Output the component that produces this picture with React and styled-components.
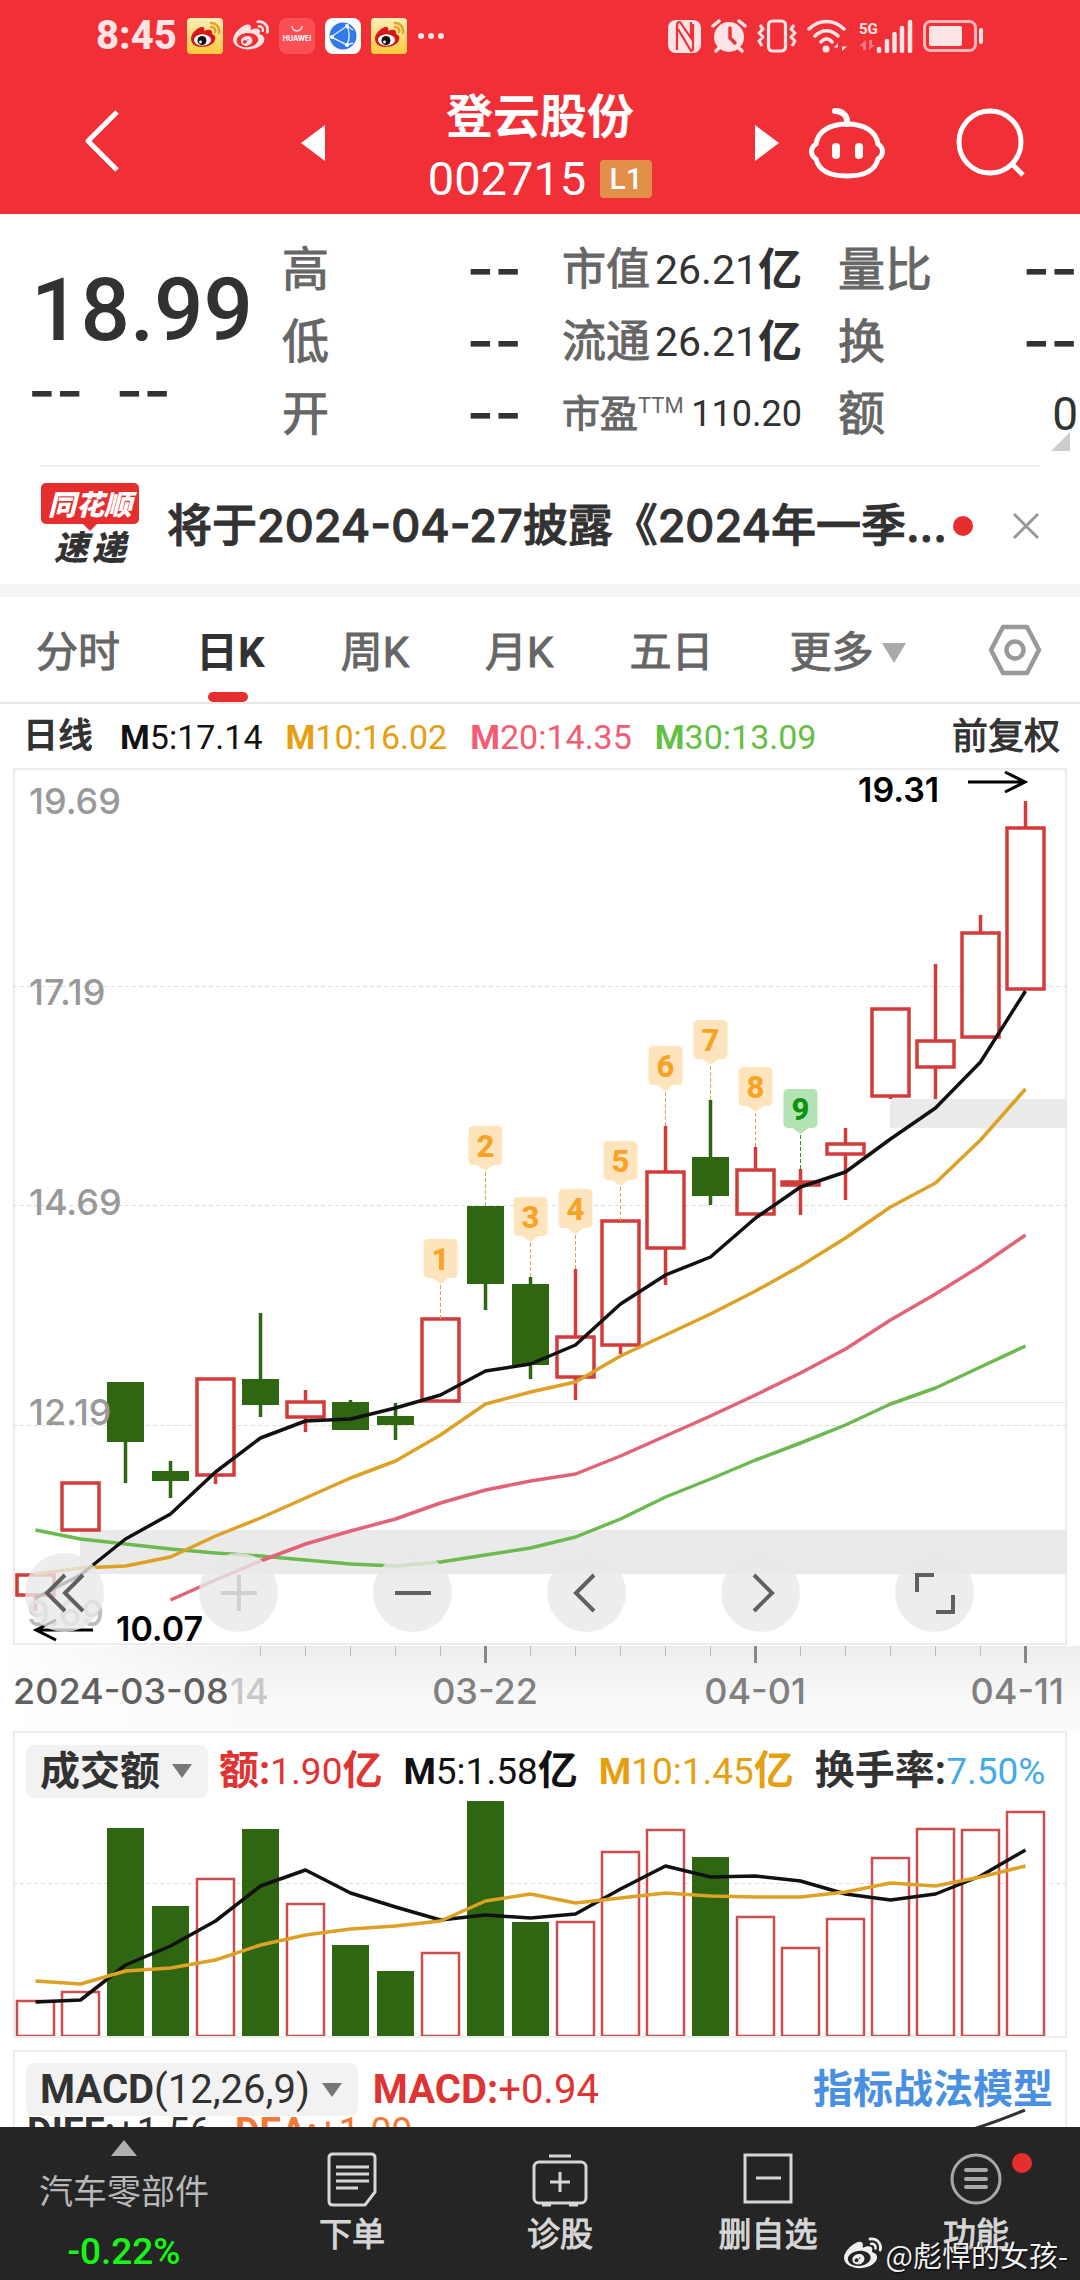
import React from "react";
import styled, { createGlobalStyle } from "styled-components";
import { FaWeibo } from "react-icons/fa";

const cjk = '"Noto Sans CJK SC", sans-serif';
const uiFont = `Roboto, ${cjk}`;
const wideFont = `Inter, ${cjk}`;

const color = {
  brand: "#f12f37",
  accent: "#e62e2e",
  up: "#d33b3a",
  down: "#2f6612",
  text: "#323232",
  label: "#666666",
  muted: "#999999",
  line: "#ececec",
  ma5: "#111111",
  ma10: "#e6a00f",
  ma20: "#f55c73",
  ma30: "#64c044",
};

const GlobalStyle = createGlobalStyle`
  *, *::before, *::after { box-sizing: border-box; }
  body { margin: 0; background: #fff; }
  button, select { font: inherit; color: inherit; border: 0; padding: 0; background: none; }
  svg { display: block; flex: none; }
  a { color: inherit; text-decoration: none; }
`;

const Screen = styled.div`
  display: flex;
  flex-direction: column;
  height: 100vh;
  overflow: hidden;
  background: #fff;
  color: ${color.text};
  font-family: ${uiFont};
`;

/* ---------- header ---------- */

const Header = styled.header`
  flex: none;
  background: ${color.brand};
  color: #fff;
`;

const StatusBar = styled.div`
  display: flex;
  justify-content: space-between;
  align-items: center;
  height: 72px;
  padding: 0 96px;
  color: #ffe4e5;
`;

const StatusGroup = styled.div`
  display: flex;
  align-items: center;
  gap: 10px;
`;

const Clock = styled.time`
  font-size: 40px;
  line-height: 48px;
  font-weight: 800;
`;

const Nav = styled.nav`
  display: grid;
  grid-template-columns: 1fr 478px 1fr;
  align-items: center;
  height: 142px;
`;

const BackButton = styled.button`
  justify-self: start;
  margin-left: 80px;
`;

const Pager = styled.div`
  display: flex;
  align-items: center;
  justify-content: space-between;
`;

const TitleBlock = styled.div`
  display: flex;
  flex-direction: column;
  align-items: center;
  padding-top: 8px;
`;

const StockName = styled.h1`
  margin: 0;
  font-size: 47px;
  line-height: 64px;
  font-weight: 700;
`;

const CodeLine = styled.div`
  display: flex;
  align-items: center;
  gap: 14px;
  font-size: 47px;
  line-height: 60px;
`;

const LevelBadge = styled.span`
  width: 52px;
  border-radius: 4px;
  background: #e28f4a;
  text-align: center;
  font-size: 30px;
  line-height: 38px;
  font-weight: 500;
`;

const NavActions = styled.div`
  display: flex;
  align-items: center;
  justify-content: space-between;
  padding: 0 55px 0 28px;
`;

/* ---------- quote ---------- */

const Quote = styled.section`
  flex: none;
  display: grid;
  grid-template-columns:
    minmax(0, 282fr) minmax(0, 240fr) minmax(0, 40fr) minmax(0, 240fr)
    minmax(0, 36fr) minmax(0, 240fr) minmax(0, 2fr);
  height: 251px;
  padding-top: 20px;
  position: relative;
`;

const PriceBlock = styled.div`
  padding: 32px 0 0 28px;
`;

const Price = styled.div`
  padding-left: 3px;
  font-size: 87px;
  line-height: 88px;
  font-weight: 500;
`;

const Changes = styled.div`
  display: flex;
  gap: 32px;
  padding-top: 12px;
`;

const Dashes = styled.span`
  padding-bottom: 4px;
  font-family: ${wideFont};
  font-size: 60px;
  line-height: 48px;
  font-weight: 500;
`;

const StatColumn = styled.dl`
  margin: 0;
  grid-column: ${(p) => p.$col};
`;

const Stat = styled.div`
  display: flex;
  align-items: center;
  justify-content: space-between;
  height: 72px;
  white-space: nowrap;
`;

const StatLabel = styled.dt`
  color: ${color.label};
  -webkit-text-stroke: 1px ${color.label};
  font-size: ${(p) => p.$size}px;
  line-height: 64px;
  sup {
    font-size: 22px;
    line-height: 24px;
    -webkit-text-stroke: 0;
  }
`;

const StatValue = styled.dd`
  display: flex;
  align-items: center;
  margin: 0;
  font-size: ${(p) => p.$size}px;
  line-height: 64px;
  b { font-size: 44px; }
`;

const ExpandCorner = styled.span`
  position: absolute;
  right: 10px;
  bottom: 14px;
  border-left: 19px solid transparent;
  border-bottom: 19px solid #cccccc;
`;

/* ---------- news ---------- */

const News = styled.section`
  flex: none;
  display: flex;
  align-items: center;
  height: 119px;
  margin: 0 40px;
  border-top: 2px solid #f0f0f0;
`;

const BrandTag = styled.span`
  flex: none;
  display: grid;
  justify-items: center;
  width: 100px;
  font-family: ${cjk};
  font-weight: 900;
  font-style: italic;
`;

const BrandTop = styled.span`
  position: relative;
  width: 98px;
  border-radius: 5px;
  background: ${color.accent};
  color: #fff;
  text-align: center;
  font-size: 28px;
  line-height: 41px;
  &::after {
    content: "";
    position: absolute;
    left: 42px;
    top: 41px;
    border: 7px solid transparent;
    border-top-color: ${color.accent};
    border-bottom: 0;
  }
`;

const BrandBottom = styled.span`
  display: flex;
  gap: 4px;
  font-size: 34px;
  line-height: 44px;
`;

const Headline = styled.a`
  margin-left: 27px;
  font-family: ${wideFont};
  font-size: 45px;
  line-height: 60px;
  font-weight: 500;
  white-space: nowrap;
  -webkit-text-stroke: 1px ${color.text};
`;

const Dot = styled.span`
  flex: none;
  width: 20px;
  height: 20px;
  border-radius: 50%;
  background: ${color.accent};
`;

const NewsDot = styled(Dot)`
  margin-left: 6px;
`;

const CloseButton = styled.button`
  margin-left: auto;
`;

const Strip = styled.div`
  flex: none;
  height: 13px;
  background: #f4f4f4;
`;

/* ---------- period tabs ---------- */

const Tabs = styled.nav`
  flex: none;
  display: flex;
  align-items: center;
  gap: 76px;
  height: 107px;
  padding: 0 38px 0 36px;
  border-bottom: 2px solid #e8e8e8;
  font-size: 42px;
  line-height: 60px;
  color: ${color.label};
`;

const Tab = styled.button`
  position: relative;
  display: flex;
  align-items: center;
  gap: 9px;
  height: 105px;
  padding-top: 6px;
  font-weight: ${(p) => (p.$active ? 700 : 400)};
  color: ${(p) => (p.$active ? color.text : color.label)};
  -webkit-text-stroke: ${(p) => (p.$active ? 0 : 1)}px ${color.label};
  &::after {
    content: "";
    display: ${(p) => (p.$active ? "block" : "none")};
    position: absolute;
    left: calc(50% - 22px);
    bottom: 0;
    width: 40px;
    height: 10px;
    border-radius: 5px;
    background: ${color.accent};
  }
`;

const Caret = styled.span`
  border: ${(p) => p.$w}px solid transparent;
  border-top: ${(p) => p.$h}px solid ${(p) => p.$fill};
  border-bottom: 0;
`;

const SettingsButton = styled.button`
  margin-left: auto;
`;

/* ---------- indicator rows ---------- */

const Averages = styled.div`
  flex: none;
  display: flex;
  align-items: center;
  gap: 23px;
  height: 64px;
  padding: 2px 20px 0 23px;
  font-size: 34px;
  line-height: 48px;
`;

const Strong = styled.b`
  font-weight: 700;
`;

const Period = styled.b`
  padding-right: 4px;
  font-size: 35px;
`;

const Figure = styled.span`
  color: ${(p) => p.$color};
  white-space: nowrap;
`;

const Adjust = styled.button`
  margin-left: auto;
  font-size: 36px;
  -webkit-text-stroke: 1px ${color.text};
`;

const ChartFrame = styled.section`
  flex: none;
  position: relative;
  margin: 0 13px;
  svg { width: 100%; height: auto; }
`;

const ChartControls = styled.div`
  position: absolute;
  left: 0;
  right: 0;
  bottom: 14px;
  display: flex;
  justify-content: space-between;
  padding: 0 93px 0 12px;
`;

const RoundButton = styled.button`
  display: grid;
  place-items: center;
  width: 79px;
  height: 79px;
  border-radius: 50%;
  background: rgba(232, 232, 232, 0.8);
  color: ${(p) => (p.disabled ? "#d0d0d0" : "#606060")};
  svg { width: 44px; height: 44px; }
`;

const Axis = styled.div`
  flex: none;
  height: 85px;
  padding: 0 13px;
  background: linear-gradient(to right, #fff, rgba(255, 255, 255, 0) 260px),
    linear-gradient(to bottom, #ededed, #fafafa 60px);
  svg { width: 100%; height: auto; }
`;

const Panel = styled.section`
  flex: ${(p) => (p.$fill ? "1 1 0" : "none")};
  min-height: 0;
  overflow: hidden;
  position: relative;
  margin: 0 13px ${(p) => (p.$fill ? 0 : 12)}px;
  border: 2px solid ${color.line};
  border-bottom-width: ${(p) => (p.$fill ? 0 : 2)}px;
`;

const PanelHead = styled.div`
  display: flex;
  align-items: center;
  gap: ${(p) => p.$gap}px;
  padding: 11px 12px 0 11px;
  font-size: ${(p) => p.$size}px;
  line-height: 53px;
  white-space: nowrap;
`;

const Figures = styled.div`
  flex: 1;
  display: flex;
  gap: 21px;
`;

const Chip = styled.button`
  display: flex;
  align-items: center;
  gap: 12px;
  height: 53px;
  padding: 0 16px 0 14px;
  border-radius: 8px;
  background: #f2f2f2;
`;

const Cn = styled.b`
  font-size: 40px;
  font-weight: 700;
`;

const Model = styled.a`
  margin-left: auto;
  color: #4990e2;
  font-size: 40px;
  font-weight: 700;
`;

const VolumePlot = styled.div`
  margin: 3px -2px -2px;
  svg { width: 100%; height: auto; }
`;

const SecondLine = styled.div`
  display: flex;
  gap: 24px;
  padding-left: 12px;
  font-size: 38px;
  line-height: 32px;
`;

const MacdCurve = styled.svg`
  position: absolute;
  right: 38px;
  top: 57px;
`;

/* ---------- bottom bar ---------- */

const BottomBar = styled.footer`
  flex: none;
  position: relative;
  display: grid;
  grid-template-columns: 248fr 208fr 208fr 208fr 208fr;
  height: 153px;
  background: #252525;
  color: #d6d6d6;
`;

const Sector = styled.a`
  display: flex;
  flex-direction: column;
  align-items: center;
  padding-top: 13px;
  font-size: 34px;
  line-height: 60px;
  color: #b8b8b8;
`;

const UpCaret = styled.span`
  border: 13px solid transparent;
  border-bottom: 16px solid #b0b0b0;
  border-top: 0;
  margin-bottom: 6px;
`;

const SectorChange = styled.span`
  color: #17f617;
  font-size: 37px;
  font-weight: 500;
`;

const Action = styled.button`
  position: relative;
  display: flex;
  flex-direction: column;
  align-items: center;
  justify-content: flex-start;
  padding-top: 24px;
  font-size: 33px;
  line-height: 56px;
  -webkit-text-stroke: 1px #d6d6d6;
`;

const ActionDot = styled(Dot)`
  position: absolute;
  left: calc(50% + 36px);
  top: 26px;
`;

const Watermark = styled.div`
  position: absolute;
  right: 12px;
  bottom: 6px;
  display: flex;
  align-items: center;
  gap: 4px;
  color: #f0f0f0;
  font-family: ${cjk};
  font-size: 29px;
  line-height: 40px;
  text-shadow: 1px 1px 2px #000;
`;

/* ---------- icons ---------- */

const WeiboApp = () => (
  <svg width="36" height="36" viewBox="0 0 36 36">
    <defs>
      <linearGradient id="wb" x1="0" y1="0" x2="0" y2="1">
        <stop offset="0" stopColor="#fdeeb8" />
        <stop offset="1" stopColor="#fbcb3a" />
      </linearGradient>
    </defs>
    <rect width="36" height="36" rx="4" fill="url(#wb)" />
    <path d="M4 21c0-6 7-12 11-12 2 0 3 1 2 4 4-2 9-2 8 3 3 1 4 3 3 6-1 4-7 7-13 7S4 26 4 21z" fill="#d8161b" />
    <ellipse cx="15.500" cy="22" rx="8.500" ry="5.800" fill="#fff" />
    <circle cx="15" cy="22.500" r="4.500" fill="#111" />
    <circle cx="13.500" cy="24" r="1.400" fill="#fff" />
    <path d="M24 5c5 0 9 4 8 10M24 9c3 0 5 2 4 5" fill="none" stroke="#e6a32c" strokeWidth="2.400" strokeLinecap="round" />
  </svg>
);

const HuaweiApp = () => (
  <svg width="36" height="36" viewBox="0 0 36 36">
    <rect width="36" height="36" rx="8" fill="#fb4e55" />
    <path d="M13 8a5 5 0 0 0 10 0" fill="none" stroke="#fff" strokeWidth="1.200" />
    <text x="18" y="23" fill="#fff" fontSize="7" fontWeight="700" fontFamily="Inter, sans-serif" textAnchor="middle">HUAWEI</text>
  </svg>
);

const BrowserApp = () => (
  <svg width="36" height="36" viewBox="0 0 36 36">
    <rect width="36" height="36" rx="8" fill="#fff" />
    <circle cx="18" cy="18" r="13.500" fill="#3279ec" />
    <path d="M6 19L22 8c3 6 3 12 0 19L6 19zM22 8l6 4M22 27l6-2" fill="none" stroke="#dfeaff" strokeWidth="1.500" />
    <circle cx="22" cy="8" r="2" fill="#fff" /><circle cx="22" cy="27" r="2" fill="#fff" /><circle cx="7" cy="19" r="2" fill="#fff" />
  </svg>
);

const MoreDots = () => (
  <svg width="28" height="8" viewBox="0 0 28 8" fill="currentColor">
    <circle cx="4" cy="4" r="3" /><circle cx="14" cy="4" r="3" /><circle cx="24" cy="4" r="3" />
  </svg>
);

const Nfc = () => (
  <svg width="33" height="33" viewBox="0 0 33 33">
    <rect width="33" height="33" rx="8" fill="currentColor" />
    <path d="M9 30V5q0-3 3-3l11 16V2M10 9l13 22q2 0 2-3V4" fill="none" stroke={color.brand} strokeWidth="2.200" />
  </svg>
);

const Alarm = () => (
  <svg width="36" height="34" viewBox="0 0 36 34">
    <circle cx="18" cy="18" r="15" fill="currentColor" />
    <path d="M2 7l6-5M34 7l-6-5M9 28l-4 4M27 28l4 4" stroke="currentColor" strokeWidth="3.500" strokeLinecap="round" />
    <path d="M19 9v10l5 5" fill="none" stroke={color.brand} strokeWidth="3.500" strokeLinecap="round" strokeLinejoin="round" />
  </svg>
);

const Vibrate = () => (
  <svg width="40" height="34" viewBox="0 0 40 34" fill="none" stroke="currentColor" strokeWidth="3.200" strokeLinejoin="round">
    <rect x="11.500" y="2" width="17" height="30" rx="4" />
    <path d="M3 6l3 4-4 4 4 4-4 4 3 5M37 6l-3 4 4 4-4 4 4 4-3 5" strokeWidth="3" />
  </svg>
);

const Wifi = () => (
  <svg width="42" height="34" viewBox="0 0 42 34" fill="none" stroke="currentColor" strokeWidth="3.500" strokeLinecap="round">
    <path d="M2 10c10-10 25-10 35 0M8 17c7-7 16-7 23 0M14 23c3-4 8-4 11 0" />
    <circle cx="19" cy="30" r="3.500" fill="currentColor" stroke="none" />
    <path d="M31 32v-8l-4 4.500h4M35 24v8l5-4.500h-5z" fill="currentColor" stroke="none" />
  </svg>
);

const Signal = () => (
  <svg width="54" height="34" viewBox="0 0 54 34">
    <text x="0" y="15" fill="currentColor" fontSize="15" fontWeight="700" fontFamily={uiFont}>5G</text>
    <path d="M7 31V21L0 27h4v4zM10 21v10l6-5h-3v-5z" fill="currentColor" opacity="0.4" />
    <path d="M20 32v-2M28 32V22M35.500 32V15M43 32V9M51 32V3" stroke="currentColor" strokeWidth="4.500" strokeLinecap="round" />
  </svg>
);

const Battery = () => (
  <svg width="61" height="34" viewBox="0 0 61 34">
    <rect x="1.500" y="2.500" width="51" height="29" rx="6" fill="none" stroke="currentColor" strokeWidth="3" opacity="0.75" />
    <rect x="6" y="7" width="33" height="20" rx="2" fill="currentColor" />
    <rect x="56" y="9" width="4" height="16" rx="2" fill="currentColor" />
  </svg>
);

const BackIcon = () => (
  <svg width="44" height="70" viewBox="0 0 44 70" fill="none" stroke="#fff" strokeWidth="5">
    <path d="M37 4L8 33l29 29" strokeLinejoin="round" />
  </svg>
);

const RobotIcon = () => (
  <svg width="80" height="72" viewBox="0 0 80 72" fill="none" stroke="#fff" strokeWidth="5" strokeLinecap="round">
    <path d="M28 4c8 0 13 5 12 13" strokeWidth="6" />
    <path d="M40 17c-17 0-29 7-31 20-6 4-6 11 0 15 3 12 14 17 31 17s28-5 31-17c6-4 6-11 0-15-2-13-14-20-31-20z" />
    <path d="M29 40v8M52 40v8" strokeWidth="8" />
  </svg>
);

const SearchIcon = () => (
  <svg width="70" height="70" viewBox="0 0 70 70" fill="none" stroke="#fff" strokeWidth="5">
    <circle cx="35" cy="34" r="31" />
    <path d="M57 56l11 11" />
  </svg>
);

const Arrow = ({ flip }) => (
  <svg width="24" height="36" viewBox="0 0 24 36" fill="#fff">
    <path d={flip ? "M0 0v36l24-18z" : "M24 0v36L0 18z"} />
  </svg>
);

const CloseIcon = () => (
  <svg width="28" height="28" viewBox="0 0 28 28" stroke="#999" strokeWidth="3">
    <path d="M2 2l24 24M26 2L2 26" />
  </svg>
);

const HexIcon = () => (
  <svg width="54" height="52" viewBox="0 0 54 52" fill="none" stroke="#999" strokeWidth="4.500" strokeLinejoin="round">
    <path d="M15 3h24l12 23-12 23H15L3 26z" />
    <circle cx="27" cy="26" r="8.500" />
  </svg>
);

const iconStroke = { fill: "none", stroke: "currentColor", strokeWidth: 3 };

const OrderIcon = () => (
  <svg width="56" height="56" viewBox="0 0 56 56" {...iconStroke}>
    <path d="M9 3h38q4 0 4 4v34L41 54H9q-4 0-4-4V7q0-4 4-4zM12 16h33M12 23h33M12 30h33M12 37h22" />
  </svg>
);

const DoctorIcon = () => (
  <svg width="56" height="56" viewBox="0 0 56 56" {...iconStroke}>
    <rect x="2" y="11" width="52" height="41" rx="5" />
    <path d="M17 5h22M28 21v20M18 31h20M10 54h9M37 54h9" />
  </svg>
);

const RemoveIcon = () => (
  <svg width="56" height="56" viewBox="0 0 56 56" {...iconStroke}>
    <path d="M5 4h46v47H5zM16 27h25" />
  </svg>
);

const MenuIcon = () => (
  <svg width="56" height="56" viewBox="0 0 56 56" {...iconStroke} stroke="#a8a8a8">
    <circle cx="28" cy="28" r="24" />
    <path d="M18 19h20M18 28h20M18 36h20" strokeLinecap="round" strokeWidth="4" />
  </svg>
);

/* ---------- chart data ---------- */

const STEP = 45;
const cx = (i) => 22.5 + i * STEP;

// [rising, high, body top, body bottom, low] as distances below the chart's top edge
const candles = [
  [1, 807, 807, 827, 843], [1, 715, 715, 762, 762], [0, 614, 614, 674, 715], [0, 693, 703, 713, 730],
  [1, 611, 611, 707, 716], [0, 545, 611, 637, 649], [1, 622, 634, 649, 664], [0, 632, 634, 662, 662],
  [0, 635, 648, 657, 672], [1, 551, 551, 633, 633], [0, 438, 438, 516, 542], [0, 509, 516, 597, 611],
  [1, 501, 569, 609, 632], [1, 453, 453, 577, 586], [1, 358, 404, 480, 517], [0, 332, 389, 428, 437],
  [1, 379, 402, 446, 446], [1, 401, 414, 417, 447], [1, 360, 376, 386, 432], [1, 241, 241, 328, 331],
  [1, 196, 273, 299, 331], [1, 147, 165, 269, 269], [1, 33, 60, 221, 221],
];

const priceLines = [
  { stroke: "#6cb950", from: 0, ys: [762, 771, 776, 781, 785, 788, 792, 796, 798, 794, 787, 780, 769, 751, 729, 711, 692, 675, 657, 636, 620, 599, 578] },
  { stroke: "#e26277", from: 3, ys: [832, 812, 793, 776, 763, 751, 735, 722, 713, 706, 688, 668, 648, 627, 605, 581, 552, 526, 498, 467] },
  { stroke: "#dda126", from: 0, ys: [806, 800, 798, 789, 768, 750, 730, 710, 693, 667, 636, 624, 614, 588, 567, 546, 523, 498, 470, 439, 415, 372, 321] },
  { stroke: "#111111", from: 0, ys: [830, 807, 771, 746, 704, 670, 653, 651, 640, 627, 603, 596, 577, 536, 507, 489, 450, 419, 404, 371, 340, 294, 223] },
];

const volumes = [
  [1, 200], [1, 191], [0, 27], [0, 105], [1, 78], [0, 28], [1, 103], [0, 144], [0, 170], [1, 152], [0, 0], [0, 121],
  [1, 121], [1, 51], [1, 29], [0, 56], [1, 116], [1, 147], [1, 118], [1, 57], [1, 28], [1, 29], [1, 11],
];

const volumeLines = [
  { stroke: "#111111", from: 0, ys: [201, 199, 164, 145, 120, 85, 69, 92, 106, 119, 114, 117, 113, 88, 65, 76, 75, 80, 93, 99, 93, 75, 49] },
  { stroke: "#dda126", from: 0, ys: [180, 183, 170, 167, 159, 144, 134, 128, 125, 120, 100, 93, 102, 97, 92, 95, 96, 96, 91, 82, 85, 76, 65] },
];

const Line = ({ stroke, from, ys }) => (
  <polyline
    points={ys.map((y, i) => `${cx(i + from)},${y}`).join(" ")}
    fill="none" stroke={stroke} strokeWidth="3.500" strokeLinejoin="round"
  />
);

const Candle = ({ i, data: [rising, high, top, bottom, low] }) => {
  const x = cx(i);
  const c = rising ? color.up : color.down;
  return (
    <g stroke={c} strokeWidth="3.500">
      <path d={`M${x} ${high}V${top}M${x} ${bottom}V${low}`} />
      {rising
        ? <rect x={x - 18.5} y={top} width="37" height={bottom - top} fill="#fff" />
        : <rect x={x - 18.5} y={top} width="37" height={bottom - top} fill={c} stroke="none" />}
    </g>
  );
};

const Count = ({ n }) => {
  const x = cx(n + 8);
  const high = candles[n + 8][1];
  const top = high - 80;
  const last = n === 9;
  return (
    <g>
      <path d={`M${x - 12} ${top}h24q5 0 5 5v29q0 5-5 5h-4l-8 6-8-6h-4q-5 0-5-5V${top + 5}q0-5 5-5z`} fill={last ? "#b3e2b4" : "#fee4bd"} />
      <path d={`M${x} ${high - 34}V${high}`} stroke={last ? "#2d8a2d" : "#d8a84a"} strokeDasharray="4 2" />
      <text x={x} y={top + 31} textAnchor="middle" fontSize="31" fontWeight="800" fontFamily={uiFont} fill={last ? "#0a940a" : "#f8a325"}>{n}</text>
    </g>
  );
};

const PriceChart = () => (
  <svg viewBox="0 0 1054 878" fontFamily={wideFont} role="img" aria-label="日K">
    <rect x="1" y="1" width="1052" height="875" fill="none" stroke="#ececec" strokeWidth="2" />
    <path d="M0 218.500H1054M0 437.500H1054M0 657.500H1054" stroke="#dddddd" strokeDasharray="4 3" />
    <path d="M382 634.500H1054" stroke="#e6e6e6" />
    <path d="M67 762h987v44H67zM877 331h177v29H877z" fill="#eaeaea" />
    {candles.map((d, i) => <Candle key={i} i={i} data={d} />)}
    {priceLines.map((l) => <Line key={l.stroke} {...l} />)}
    {[1, 2, 3, 4, 5, 6, 7, 8, 9].map((n) => <Count key={n} n={n} />)}
    <g fontSize="36" fontWeight="500" fill="#999">
      <text x="16" y="46">19.69</text>
      <text x="16" y="237">17.19</text>
      <text x="16" y="447">14.69</text>
      <text x="16" y="657">12.19</text>
      <text x="14" y="858" fill="#bbb">9.69</text>
    </g>
    <g fontSize="34" fontWeight="600" fill="#000">
      <text x="845" y="34">19.31</text>
      <text x="103" y="873">10.07</text>
    </g>
    <path d="M955 14h56M992 4l20 10-20 10M80 862H24M43 852l-20 10 20 10" fill="none" stroke="#000" strokeWidth="3" />
  </svg>
);

const DateAxis = () => (
  <svg viewBox="0 0 1054 86" fontFamily={wideFont}>
    {candles.map((_, i) => {
      const major = i === 10 || i === 16 || i === 22;
      return i > 4 && (
        <path key={i} d={`M${cx(i)} 0v${major ? 17 : 10}`} stroke={major ? "#888" : "#bbb"} strokeWidth={major ? 3 : 1} />
      );
    })}
    <g fontSize="36" fontWeight="500" fill="#808080">
      <text x="217" y="58" fill="#c8c8c8">14</text>
      <text x="0" y="58" fill="#606060">2024-03-08</text>
      <text x="472" y="58" textAnchor="middle">03-22</text>
      <text x="742" y="58" textAnchor="middle">04-01</text>
      <text x="1051" y="58" textAnchor="end">04-11</text>
    </g>
  </svg>
);

const VolumeChart = () => (
  <svg viewBox="0 0 1054 237" role="img" aria-label="成交额">
    <path d="M0 82.500H1054" stroke="#dddddd" strokeDasharray="4 3" />
    {volumes.map(([rising, y], i) => (
      <rect key={i} x={cx(i) - 18.5} y={y} width="37" height={235 - y}
        fill={rising ? "#fff" : color.down} stroke={rising ? "#cb4f4f" : "none"} strokeWidth="2.500" />
    ))}
    {volumeLines.map((l) => <Line key={l.stroke} {...l} />)}
  </svg>
);

const Empty = () => <Dashes>--</Dashes>;

const averages = [
  ["M", "5:17.14", color.ma5], ["M", "10:16.02", color.ma10],
  ["M", "20:14.35", color.ma20], ["M", "30:13.09", color.ma30],
];

const controls = [
  ["最早", "M22 4L4 22l18 18M40 4L22 22l18 18"],
  ["放大", "M4 22h36M22 4v36"],
  ["缩小", "M4 22h36"],
  ["左移", "M29 4L11 22l18 18"],
  ["右移", "M15 4l18 18-18 18"],
  ["全屏", "M4 21V4h17M40 24v17H23"],
];

export default function App() {
  return (
    <>
      <GlobalStyle />
      <Screen>
        <Header>
          <StatusBar>
            <StatusGroup>
              <Clock>8:45</Clock>
              <WeiboApp />
              <FaWeibo size={36} />
              <HuaweiApp />
              <BrowserApp />
              <WeiboApp />
              <MoreDots />
            </StatusGroup>
            <StatusGroup>
              <Nfc /><Alarm /><Vibrate /><Wifi /><Signal /><Battery />
            </StatusGroup>
          </StatusBar>
          <Nav>
            <BackButton aria-label="返回"><BackIcon /></BackButton>
            <Pager>
              <button aria-label="上一只"><Arrow /></button>
              <TitleBlock>
                <StockName>登云股份</StockName>
                <CodeLine>002715<LevelBadge>L1</LevelBadge></CodeLine>
              </TitleBlock>
              <button aria-label="下一只"><Arrow flip /></button>
            </Pager>
            <NavActions>
              <button aria-label="助手"><RobotIcon /></button>
              <button aria-label="搜索"><SearchIcon /></button>
            </NavActions>
          </Nav>
        </Header>

        <Quote>
          <PriceBlock>
            <Price>18.99</Price>
            <Changes><Empty /><Empty /></Changes>
          </PriceBlock>
          <StatColumn $col={2}>
            {["高", "低", "开"].map((name) => (
              <Stat key={name}>
                <StatLabel $size={47}>{name}</StatLabel>
                <StatValue $size={46}><Empty /></StatValue>
              </Stat>
            ))}
          </StatColumn>
          <StatColumn $col={4}>
            <Stat><StatLabel $size={44}>市值</StatLabel><StatValue $size={41}>26.21<b>亿</b></StatValue></Stat>
            <Stat><StatLabel $size={44}>流通</StatLabel><StatValue $size={41}>26.21<b>亿</b></StatValue></Stat>
            <Stat><StatLabel $size={38}>市盈<sup>TTM</sup></StatLabel><StatValue $size={36}>110.20</StatValue></Stat>
          </StatColumn>
          <StatColumn $col={6}>
            <Stat><StatLabel $size={47}>量比</StatLabel><StatValue $size={46}><Empty /></StatValue></Stat>
            <Stat><StatLabel $size={47}>换</StatLabel><StatValue $size={46}><Empty /></StatValue></Stat>
            <Stat><StatLabel $size={47}>额</StatLabel><StatValue $size={46}>0</StatValue></Stat>
          </StatColumn>
          <ExpandCorner />
        </Quote>

        <News>
          <BrandTag>
            <BrandTop>同花顺</BrandTop>
            <BrandBottom><span>速</span><span>递</span></BrandBottom>
          </BrandTag>
          <Headline href="#">将于2024-04-27披露《2024年一季...</Headline>
          <NewsDot />
          <CloseButton aria-label="关闭"><CloseIcon /></CloseButton>
        </News>
        <Strip />

        <Tabs>
          <Tab>分时</Tab>
          <Tab $active>日K</Tab>
          <Tab>周K</Tab>
          <Tab>月K</Tab>
          <Tab>五日</Tab>
          <Tab>更多<Caret $w={12} $h={20} $fill="#aaaaaa" /></Tab>
          <SettingsButton aria-label="设置"><HexIcon /></SettingsButton>
        </Tabs>

        <Averages>
          <Period>日线</Period>
          {averages.map(([m, rest, c]) => (
            <Figure key={rest} $color={c}><Strong>{m}</Strong>{rest}</Figure>
          ))}
          <Adjust>前复权</Adjust>
        </Averages>

        <ChartFrame>
          <PriceChart />
          <ChartControls>
            {controls.map(([name, d]) => (
              <RoundButton key={name} aria-label={name} disabled={name === "放大"}>
                <svg viewBox="0 0 44 44" fill="none" stroke="currentColor" strokeWidth="4"><path d={d} /></svg>
              </RoundButton>
            ))}
          </ChartControls>
        </ChartFrame>
        <Axis><DateAxis /></Axis>

        <Panel>
          <PanelHead $size={37} $gap={11}>
            <Chip><Cn>成交额</Cn><Caret $w={10} $h={14} $fill="#777777" /></Chip>
            <Figures>
              <Figure $color="#e03333"><Cn>额:</Cn>1.90<Cn>亿</Cn></Figure>
              <Figure $color={color.ma5}><Strong>M</Strong>5:1.58<Cn>亿</Cn></Figure>
              <Figure $color={color.ma10}><Strong>M</Strong>10:1.45<Cn>亿</Cn></Figure>
              <Figure $color={color.text}><Cn>换手率:</Cn><Figure $color="#45aae8">7.50%</Figure></Figure>
            </Figures>
          </PanelHead>
          <VolumePlot><VolumeChart /></VolumePlot>
        </Panel>

        <Panel $fill>
          <PanelHead $size={40} $gap={15}>
            <Chip><span><Strong>MACD</Strong>(12,26,9)</span><Caret $w={10} $h={14} $fill="#777777" /></Chip>
            <Figure $color="#e03333"><Strong>MACD:</Strong>+0.94</Figure>
            <Model href="#">指标战法模型</Model>
          </PanelHead>
          <SecondLine>
            <span><Strong>DIFF:</Strong>+1.56</span>
            <Figure $color="#f47836"><Strong>DEA:</Strong>+1.09</Figure>
          </SecondLine>
          <MacdCurve width="62" height="24" viewBox="0 0 62 24" fill="none" stroke="#323232" strokeWidth="3">
            <path d="M2 22C22 16 40 9 60 1" />
          </MacdCurve>
        </Panel>

        <BottomBar>
          <Sector href="#">
            <UpCaret />
            <span>汽车零部件</span>
            <SectorChange>-0.22%</SectorChange>
          </Sector>
          <Action><OrderIcon />下单</Action>
          <Action><DoctorIcon />诊股</Action>
          <Action><RemoveIcon />删自选</Action>
          <Action><MenuIcon />功能<ActionDot /></Action>
          <Watermark><FaWeibo size={38} />@彪悍的女孩-</Watermark>
        </BottomBar>
      </Screen>
    </>
  );
}
